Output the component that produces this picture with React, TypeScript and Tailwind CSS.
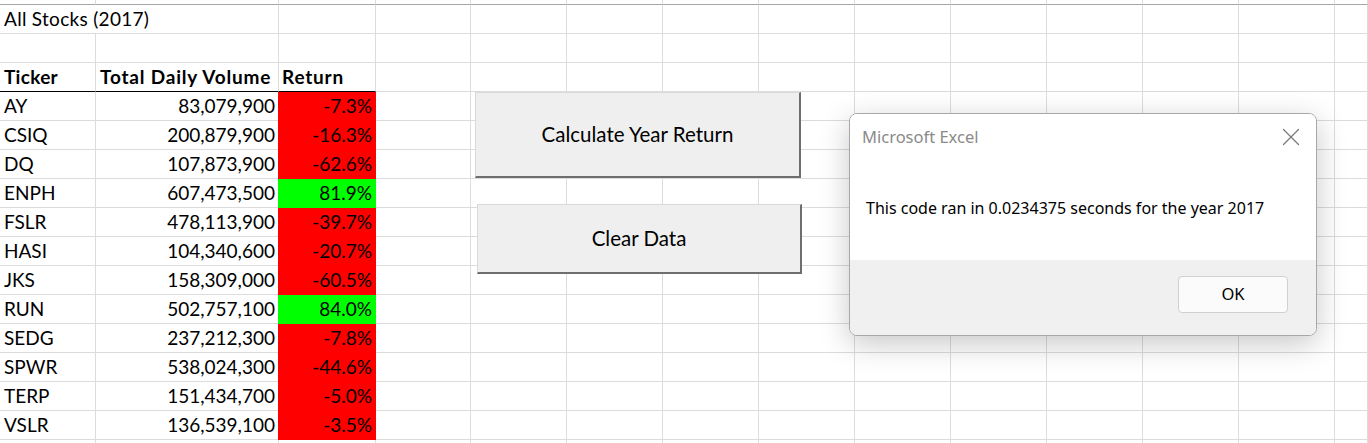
import { X } from "lucide-react";

type Stock = {
  ticker: string;
  volume: string;
  ret: string;
  up: boolean;
};

const stocks: Stock[] = [
  { ticker: "AY", volume: "83,079,900", ret: "-7.3%", up: false },
  { ticker: "CSIQ", volume: "200,879,900", ret: "-16.3%", up: false },
  { ticker: "DQ", volume: "107,873,900", ret: "-62.6%", up: false },
  { ticker: "ENPH", volume: "607,473,500", ret: "81.9%", up: true },
  { ticker: "FSLR", volume: "478,113,900", ret: "-39.7%", up: false },
  { ticker: "HASI", volume: "104,340,600", ret: "-20.7%", up: false },
  { ticker: "JKS", volume: "158,309,000", ret: "-60.5%", up: false },
  { ticker: "RUN", volume: "502,757,100", ret: "84.0%", up: true },
  { ticker: "SEDG", volume: "237,212,300", ret: "-7.8%", up: false },
  { ticker: "SPWR", volume: "538,024,300", ret: "-44.6%", up: false },
  { ticker: "TERP", volume: "151,434,700", ret: "-5.0%", up: false },
  { ticker: "VSLR", volume: "136,539,100", ret: "-3.5%", up: false },
];

// columns D..M plus the filler at the right edge
const emptyCols = 11;

function Blank({ h = "h-[29px]" }: { h?: string }) {
  return <div className={`${h} border-r border-b border-[#dcdcdc]`} />;
}

function BlankRow() {
  return (
    <>
      {Array.from({ length: emptyCols }).map((_, i) => (
        <Blank key={i} />
      ))}
    </>
  );
}

function Sheet() {
  return (
    <div className="grid grid-cols-[96px_183px_97px_95px_repeat(9,96px)_1fr] font-[Lato,sans-serif] text-[19px] leading-[28px] text-black">
      {/* sliver of the row above, then the header edge */}
      {Array.from({ length: 3 + emptyCols }).map((_, i) => (
        <div key={`top-${i}`} className="h-[5px] border-r border-b border-r-[#dcdcdc] border-b-[#a6a6a6]" />
      ))}

      {/* row 1: title overflows into column B */}
      <div className="h-[29px] whitespace-nowrap border-b border-[#dcdcdc] px-1 tracking-[0.3px]">All Stocks (2017)</div>
      <Blank />
      <Blank />
      <BlankRow />

      {/* row 2 */}
      <Blank />
      <Blank />
      <Blank />
      <BlankRow />

      {/* row 3: headers */}
      <div className="h-[29px] border-r border-b border-r-[#dcdcdc] border-b-black px-1 font-bold tracking-[0.3px]">Ticker</div>
      <div className="h-[29px] whitespace-nowrap border-r border-b border-r-[#dcdcdc] border-b-black px-1 font-bold tracking-[0.8px]">
        Total Daily Volume
      </div>
      <div className="h-[29px] border-r border-b border-r-[#dcdcdc] border-b-black pl-[3px] font-bold tracking-[0.8px]">
        Return
      </div>
      <BlankRow />

      {stocks.map((s) => (
        <div key={s.ticker} className="contents">
          <div className="h-[29px] border-r border-b border-[#dcdcdc] px-1">{s.ticker}</div>
          <div className="h-[29px] border-r border-b border-[#dcdcdc] pr-[3px] text-right">{s.volume}</div>
          <div
            className={
              s.up
                ? "-ml-px h-[29px] border-r border-b border-[#00ff00] bg-[#00ff00] pr-[3px] text-right"
                : "-ml-px h-[29px] border-r border-b border-[#ff0000] bg-[#ff0000] pr-[3px] text-right"
            }
          >
            {s.ret}
          </div>
          <BlankRow />
        </div>
      ))}

      {/* tail of the next row */}
      {Array.from({ length: 3 + emptyCols }).map((_, i) => (
        <div key={`end-${i}`} className="h-[10px] border-r border-[#dcdcdc]" />
      ))}
    </div>
  );
}

function SheetButton({ label, className }: { label: string; className: string }) {
  return (
    <div
      className={`absolute flex items-center justify-center border-t border-l border-[#dadada] border-r-2 border-b-2 border-r-[#6e6e6e] border-b-[#6e6e6e] bg-[#efefef] font-[Lato,sans-serif] text-[20.5px] text-black ${className}`}
    >
      {label}
    </div>
  );
}

function MessageBox() {
  return (
    <div className="absolute left-[849px] top-[113px] flex h-[223px] w-[468px] flex-col overflow-hidden rounded-[8px] border border-[#a8a8a8] bg-white font-['Noto_Sans',sans-serif] shadow-[0_8px_30px_rgba(0,0,0,0.22)]">
      <div className="flex h-[146px] flex-col bg-white">
        <div className="flex items-center justify-between pt-[8px] pl-[12px] pr-[10px]">
          <span className="text-[16.5px] text-[#8a8a8a]">Microsoft Excel</span>
          <X className="h-[30px] w-[30px] text-[#7a7a7a]" strokeWidth={1} />
        </div>
        <p className="mt-[44px] pl-[16px] text-[16px] text-black">
          This code ran in 0.0234375 seconds for the year 2017
        </p>
      </div>
      <div className="flex flex-1 items-start justify-end bg-[#f0f0f0] pt-[16px] pr-[28px]">
        <div className="flex h-[37px] w-[110px] items-center justify-center rounded-[4px] border border-[#d0d0d0] bg-[#fbfbfb] text-[16.5px] text-black">
          OK
        </div>
      </div>
    </div>
  );
}

export default function App() {
  return (
    <div className="relative h-[443px] w-[1368px] overflow-hidden bg-white">
      <Sheet />
      <SheetButton label="Calculate Year Return" className="left-[475px] top-[92px] h-[86px] w-[326px]" />
      <SheetButton label="Clear Data" className="left-[477px] top-[204px] h-[70px] w-[325px]" />
      <MessageBox />
    </div>
  );
}
